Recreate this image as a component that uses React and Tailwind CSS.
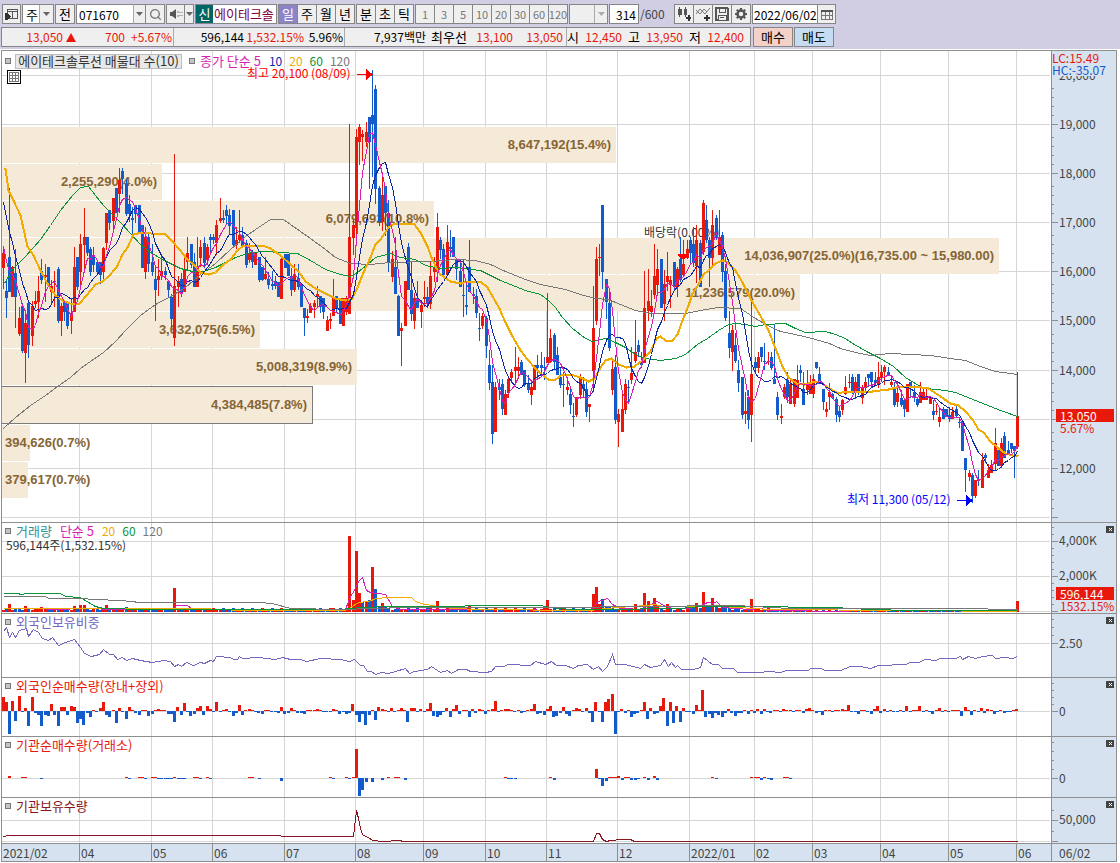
import { Search } from 'lucide-react'

const LEFT = 2
const WIDTH = 1049
const STEP = 3.2396

const RED = '#e8190a'
const BLUE = '#135bcb'

const months = [
  [2, '2021/02'], [79, '04'], [151, '05'], [212, '06'], [284, '07'], [355, '08'], [423, '09'], [485, '10'],
  [546, '11'], [617, '12'], [689, '2022/01'], [754, '02'], [812, '03'], [880, '04'], [948, '05'], [1016, '06'],
]

const profile = [
  { right: 616, label: '8,647,192(15.4%)' },
  { right: 162, label: '2,255,290(4.0%)' },
  { right: 434, label: '6,079,692(10.8%)' },
  { right: 999, label: '14,036,907(25.0%)(16,735.00 ~ 15,980.00)' },
  { right: 800, label: '11,236,579(20.0%)' },
  { right: 260, label: '3,632,075(6.5%)' },
  { right: 357, label: '5,008,319(8.9%)' },
  { right: 313, label: '4,384,485(7.8%)', current: true },
  { right: 30, label: '394,626(0.7%)' },
  { right: 28, label: '379,617(0.7%)' },
]

// x, high, low, body top, body bottom, up (1) / down (0)
const candles = [
  [3,246,289,253,268,1],[6,280,318,291,298,0],[9,188,292,257,292,0],[12,266,297,267,297,1],[15,249,328,273,297,0],[19,307,336,318,334,1],
  [22,303,353,306,351,0],[25,312,383,323,353,1],[28,301,358,303,345,0],[32,301,346,306,336,1],[35,291,308,301,304,1],[38,276,318,291,302,1],
  [41,259,284,271,280,0],[45,264,302,275,277,1],[48,267,287,267,285,0],[51,280,303,286,292,1],[54,271,307,281,282,1],[58,267,323,269,321,0],
  [61,303,336,306,321,1],[64,302,321,302,312,0],[67,303,329,303,326,0],[71,298,334,313,321,1],[74,247,312,267,312,1],[77,257,290,257,287,0],
  [80,234,290,244,272,1],[84,208,270,237,245,1],[87,237,256,237,253,0],[90,247,276,249,272,0],[93,247,272,257,265,0],[97,262,274,262,272,0],
  [100,262,284,262,275,0],[103,247,282,248,272,1],[106,213,250,213,243,1],[109,210,230,210,223,0],[113,198,233,198,221,1],[116,188,213,188,213,0],
  [119,168,213,180,194,1],[122,168,194,171,179,0],[126,179,216,184,214,0],[129,195,222,204,214,0],[132,207,237,218,220,0],[135,205,223,205,214,0],
  [139,205,233,205,233,0],[142,225,268,225,268,0],[145,227,279,237,272,1],[148,233,272,237,264,0],[152,244,276,262,272,0],[155,267,321,279,290,0],
  [158,259,296,276,280,1],[161,256,280,271,276,1],[165,267,280,271,275,0],[168,281,297,281,290,0],[171,294,328,297,319,0],[174,154,346,286,338,1],
  [178,276,307,281,287,1],[181,273,297,279,292,0],[184,256,292,269,292,1],[187,237,270,253,262,1],[191,244,268,244,265,0],[194,253,287,262,287,0],
  [197,237,287,267,287,1],[200,240,267,247,258,1],[204,237,268,243,263,0],[207,244,265,247,260,1],[210,234,252,237,240,0],[213,234,244,237,240,0],
  [216,220,255,225,243,1],[220,198,223,218,221,1],[223,210,223,218,220,0],[226,205,225,210,216,0],[229,209,234,215,226,0],[233,210,248,210,245,0],
  [236,227,249,240,245,1],[239,210,243,235,240,1],[242,227,247,235,247,0],[246,240,268,243,265,0],[249,243,263,253,260,1],[252,250,268,253,262,0],
  [255,252,265,252,265,1],[259,257,282,257,280,0],[262,267,281,267,280,0],[265,257,280,274,279,1],[268,272,289,279,285,0],[272,271,290,284,286,0],
  [275,276,289,281,286,0],[278,282,297,282,297,0],[281,257,299,259,299,1],[285,254,268,254,268,0],[288,254,276,254,276,0],[291,268,296,276,290,0],
  [294,264,292,274,290,1],[298,264,290,278,287,0],[301,284,307,284,307,0],[304,308,336,308,318,0],[307,309,323,316,318,1],[310,303,313,306,313,1],
  [314,300,318,303,307,1],[317,286,308,294,297,1],[320,296,313,296,307,0],[323,298,319,298,312,0],[327,316,331,320,331,1],[330,313,329,319,321,1],
  [333,279,316,298,316,1],[336,296,313,296,309,0],[340,298,324,298,324,0],[343,298,326,298,326,1],[346,296,315,298,312,1],[349,124,314,237,314,1],
  [353,219,255,225,238,1],[356,129,237,137,228,1],[359,124,165,127,142,1],[362,130,161,134,137,1],[366,122,147,132,142,1],[369,117,189,117,142,0],
  [372,70,177,115,124,0],[375,85,204,89,189,0],[379,186,226,188,222,0],[382,175,231,195,222,1],[385,186,236,186,213,0],[388,200,272,213,262,0],
  [392,251,282,259,277,1],[395,237,294,267,294,0],[398,295,336,296,336,0],[401,323,366,328,331,1],[405,281,326,281,326,1],[408,243,290,247,290,0],
  [411,262,321,290,314,0],[414,293,329,298,321,1],[417,281,308,298,308,0],[421,300,328,305,312,1],[424,281,307,297,299,1],[427,287,308,297,303,0],
  [430,262,309,276,304,1],[434,257,282,267,272,1],[437,213,282,227,272,1],[440,237,259,240,250,0],[443,244,275,249,275,0],[447,225,275,242,275,1],
  [450,230,257,247,249,0],[453,237,257,237,257,0],[456,260,280,260,269,0],[460,259,287,271,287,0],[463,260,317,295,296,0],[466,285,315,305,307,0],
  [469,240,292,267,292,0],[473,287,304,294,296,0],[476,289,318,296,313,0],[479,313,341,328,329,0],[482,313,329,316,326,1],[486,316,358,318,346,0],
  [489,350,390,365,383,0],[492,365,444,382,434,0],[495,382,432,387,432,1],[499,379,400,387,390,0],[502,379,415,384,409,0],[505,390,415,394,415,1],
  [508,377,398,379,393,1],[511,369,383,372,378,1],[515,347,385,367,371,1],[518,357,379,367,371,1],[521,360,375,362,375,0],[524,370,387,370,385,0],
  [528,375,393,383,390,0],[531,380,405,387,395,1],[534,365,390,365,390,1],[537,355,379,365,368,0],[541,352,377,365,368,0],[544,357,380,367,368,0],
  [547,293,363,357,363,1],[550,329,363,338,362,1],[554,333,370,335,362,0],[557,347,375,355,375,0],[560,367,388,377,385,0],[563,372,407,384,385,0],
  [567,377,395,387,390,1],[570,389,414,394,405,0],[573,403,427,416,417,0],[576,397,417,397,415,1],[580,374,399,377,395,1],[583,377,397,384,389,0],
  [586,382,417,389,412,0],[589,404,422,404,407,1],[593,286,392,328,371,1],[596,247,325,259,321,1],[599,244,276,257,258,1],[602,205,289,205,272,0],
  [606,279,319,279,302,0],[609,292,351,303,348,0],[612,359,395,369,390,1],[615,355,424,367,420,0],[618,409,447,414,422,1],[622,392,432,409,432,1],
  [625,379,414,384,410,1],[628,380,402,387,388,0],[631,347,384,373,380,1],[635,320,363,352,361,1],[638,340,357,345,352,0],[641,352,368,361,365,0],
  [644,271,363,308,363,1],[648,269,321,301,311,1],[651,290,317,306,312,1],[654,244,299,276,295,1],[657,249,294,269,285,1],[661,259,308,259,308,0],
  [664,270,321,284,304,1],[667,252,291,276,282,1],[670,276,308,280,285,1],[674,262,290,262,287,0],[677,267,297,269,287,1],[680,237,282,259,280,0],
  [683,240,277,264,275,1],[687,240,259,249,258,1],[690,237,265,240,253,0],[693,227,267,244,263,0],[696,225,283,240,266,1],[700,240,287,243,287,0],
  [703,200,255,203,252,1],[706,205,243,220,240,0],[709,237,287,240,258,0],[712,210,268,225,258,1],[716,215,240,218,238,0],[719,210,255,237,255,1],
  [722,232,282,235,272,0],[725,264,321,271,318,0],[729,311,358,333,348,0],[732,325,371,330,352,1],[735,333,363,345,361,0],[738,360,392,370,383,0],
  [742,377,419,377,415,0],[745,392,424,411,414,1],[748,390,429,397,420,0],[751,297,442,374,415,1],[755,357,372,362,368,0],[758,352,373,357,368,1],
  [761,347,362,347,357,0],[764,343,370,361,362,0],[768,352,365,361,362,1],[771,352,370,357,368,0],[774,325,384,379,384,0],[777,392,420,397,415,0],
  [781,404,424,416,418,1],[784,384,399,387,397,1],[787,372,403,380,397,0],[790,380,404,384,404,1],[794,379,407,379,404,1],[797,365,398,380,398,1],
  [800,365,382,370,373,0],[803,372,405,389,405,0],[807,370,395,384,390,1],[810,375,394,384,394,1],[813,374,398,379,394,1],[816,362,369,362,368,0],
  [819,367,384,374,384,0],[823,389,410,389,402,0],[826,402,417,409,412,1],[829,383,410,392,397,1],[832,393,399,394,398,0],[836,397,422,399,415,0],
  [839,407,422,411,417,0],[842,399,415,400,410,1],[845,376,395,387,394,1],[849,374,388,382,383,1],[852,374,394,377,392,0],[855,377,399,382,392,1],
  [858,374,395,374,393,0],[862,385,404,388,398,1],[865,377,392,382,388,1],[868,374,387,374,378,0],[871,372,388,372,382,0],[875,372,385,380,383,0],
  [878,362,388,377,385,1],[881,365,382,372,378,1],[884,365,385,367,372,1],[888,367,375,372,375,0],[891,375,387,382,385,1],[894,382,407,387,405,0],
  [897,382,407,393,402,1],[901,390,407,398,405,0],[904,400,417,400,409,0],[907,384,412,384,412,1],[910,382,398,382,387,0],[914,385,402,392,398,0],
  [917,397,407,399,405,0],[920,382,403,392,403,1],[923,388,400,392,400,1],[926,389,400,396,400,1],[930,397,404,397,404,1],[933,400,420,411,415,0],
  [936,404,415,411,412,1],[939,407,427,417,422,1],[943,407,419,409,419,0],[946,409,417,409,417,0],[949,407,422,415,419,0],[952,407,419,412,419,1],
  [956,406,418,409,416,0],[959,417,428,422,423,0],[962,421,451,421,451,0],[965,458,492,458,470,0],[969,470,481,473,477,1],[972,473,503,475,496,0],
  [975,480,498,480,496,1],[978,470,486,480,481,0],[982,453,488,460,488,1],[985,453,463,455,458,0],[988,464,478,470,478,1],[991,460,473,465,473,1],
  [995,428,470,443,464,1],[998,450,466,450,466,0],[1001,438,468,443,466,1],[1004,432,458,436,458,0],[1008,441,453,450,453,0],[1011,443,453,443,449,0],
  [1014,446,478,446,451,0],[1017,372,449,416,447,1],
]

const earlier = [145, 150, 158, 165, 172, 225, 240, 250, 262]
const closeOf = (c) => (c[5] ? c[3] : c[4])

const movingAverage = (n) => {
  const closes = [...earlier, ...candles.map(closeOf)]
  return candles
    .map((c, i) => {
      const end = i + earlier.length + 1
      const sum = closes.slice(end - n, end).reduce((a, b) => a + b, 0)
      return `${c[0]},${Math.round(sum / n)}`
    })
    .join(' ')
}

const ma20 = '3,168 5,168 8,190 13,200 20,215 27,246 33,255 40,270 48,285 55,295 62,300 72,304 79,303 86,295 95,284 102,281 108,276 116,267 122,254 127,247 133,234 141,232 150,233 165,234 172,241 180,250 186,258 194,265 200,272 208,274 215,272 222,265 230,259 237,250 243,245 262,245 270,248 280,255 290,264 298,271 305,281 315,288 325,293 335,298 345,300 352,298 357,287 363,272 370,257 375,244 380,239 388,227 394,223 413,223 420,232 427,246 431,257 436,268 440,274 450,281 460,283 467,281 480,281 487,287 492,296 499,308 504,320 511,334 520,350 527,359 535,368 541,374 548,379 555,379 562,374 570,374 580,377 588,381 594,378 600,367 605,360 611,358 618,364 626,367 634,366 642,360 650,351 656,338 660,336 665,340 672,340 677,334 682,320 688,305 692,293 698,284 703,274 708,270 715,263 722,260 727,262 735,270 742,282 750,298 758,312 768,330 775,348 782,366 788,377 796,383 804,384 815,381 820,382 829,388 838,393 845,391 872,391 880,390 888,389 900,386 915,386 928,388 940,396 950,403 958,405 965,411 972,419 978,429 983,432 990,441 997,447 1005,453 1012,455 1018,456'
const ma60 = '4,283 13,268 25,256 40,239 50,225 60,210 72,195 80,187 88,186 95,195 103,205 112,214 120,222 130,233 140,244 150,252 162,259 172,264 180,268 192,271 203,271 215,267 225,262 235,257 250,252 265,251 280,252 297,253 310,260 325,269 340,274 350,276 357,272 367,264 375,257 390,253 400,257 415,259 425,265 440,268 455,267 480,270 500,280 525,290 540,294 548,300 555,307 562,317 572,328 585,338 592,341 605,338 615,342 625,347 635,354 645,358 660,360 675,358 685,354 697,344 707,338 718,330 728,324 735,323 745,324 755,326 765,324 785,323 795,328 805,332 825,331 835,334 845,338 852,343 868,352 880,358 893,366 905,377 918,385 925,388 945,390 955,392 970,398 985,404 1000,410 1017,416'
const ma120 = '3,428 15,417 30,405 45,395 57,386 70,377 80,368 90,361 103,352 115,341 125,330 140,315 155,304 172,295 185,287 200,274 215,263 230,249 245,236 258,227 270,219 283,219 290,224 310,238 325,249 335,257 350,263 370,264 390,262 430,261 455,259 475,260 490,264 505,271 525,279 540,284 565,289 580,294 595,298 608,299 620,304 635,310 650,313 685,313 700,310 717,307 740,308 752,316 765,324 780,331 790,333 808,337 829,343 840,348 855,352 870,355 890,353 930,355 950,358 965,360 980,366 995,371 1017,374'

const volumeSpikes = {
  9: 8, 25: 6, 41: 5, 74: 6, 80: 7, 84: 7, 106: 7, 126: 5, 174: 24, 333: 4, 349: 76, 353: 12, 356: 61, 359: 19, 362: 10,
  366: 10, 369: 12, 372: 45, 375: 23, 379: 5, 382: 9, 385: 5, 430: 5, 437: 11, 447: 6, 469: 6, 495: 4, 547: 12, 593: 18,
  596: 25, 599: 8, 602: 13, 606: 6, 609: 5, 635: 8, 644: 19, 648: 11, 651: 6, 654: 14, 657: 7, 667: 8, 693: 7, 696: 9,
  703: 20, 706: 6, 709: 5, 712: 14, 716: 6, 722: 6, 725: 6, 729: 5, 751: 13, 1017: 11,
}
const volumeOf = (x, i) => volumeSpikes[x] ?? (x > 775 ? 1 + (i % 2) : 2 + ((i * 7) % 3))

const volume5 = '3,608 30,608 60,609 80,608 120,609 173,609 176,605 187,605 192,609 345,609 350,596 354,590 358,581 362,577 366,590 370,592 385,594 392,606 400,609 480,609 590,610 597,601 602,600 607,598 612,604 620,608 640,609 645,606 650,604 657,601 663,605 672,608 690,608 703,604 707,602 713,603 716,601 722,607 735,608 750,609 760,608 768,610 850,611'
const volume20 = '3,608 150,608 200,608 240,610 345,610 350,607 358,602 368,601 376,598 388,597 411,597 415,601 424,604 433,605 440,607 475,609 590,610 605,608 645,605 655,604 662,606 720,606 770,609 905,610 1017,611'
const volume60 = '3,593 18,593 20,594 28,593 60,593 65,596 80,597 88,602 95,606 103,608 145,609 340,609 360,607 390,606 540,605 550,607 570,609 600,609 680,608 700,606 785,606 790,607 840,607 845,608 905,610 1017,610'
const volume120 = '3,596 45,596 48,598 80,598 95,599 120,600 140,602 258,602 272,603 290,608 340,609 405,607 560,607 640,606 735,605 790,608 985,608 990,609 1017,609'

const foreignRatio = '3,631 6,627 9,637 12,632 15,637 19,630 26,628 28,636 33,629 38,632 42,638 48,640 52,637 58,645 65,642 74,639 80,647 84,653 91,656 99,654 103,649 109,654 113,654 117,659 122,657 126,660 132,658 140,660 152,662 163,660 170,661 174,666 178,664 181,666 186,662 193,665 200,662 204,663 210,660 213,661 216,656 230,657 233,659 237,659 239,656 242,658 258,657 275,659 282,657 290,659 300,659 306,661 320,658 340,659 349,661 354,659 360,665 363,665 367,671 371,671 375,674 381,672 388,673 395,671 405,668 409,673 414,671 427,669 431,666 440,672 447,670 451,673 458,669 466,669 470,671 485,672 491,671 495,666 503,666 508,664 530,665 535,661 545,664 551,661 556,665 565,665 573,668 578,665 587,664 593,669 598,666 602,671 607,666 612,654 615,664 625,664 640,668 644,664 650,667 660,665 664,659 668,666 671,662 675,667 677,665 681,669 693,669 700,667 703,657 712,664 718,664 722,668 733,668 737,672 760,672 768,671 780,672 786,670 808,670 810,668 820,668 825,670 840,670 850,666 860,666 870,668 878,665 905,664 910,662 918,662 925,659 935,660 940,658 955,658 960,656 962,659 968,656 975,658 982,656 992,655 995,658 1005,657 1012,658 1017,656'

const foreignNet = [
  14, 9, -23, 10, -10, 15, -1, 3, -15, 14, -2, -4, -15, -4, -5, 7, -4, -15, 4, 4, -4, 5, 4, -12, -8, -14, -2, -6, 1, -1,
  3, 9, -4, -6, 1, -12, 3, -1, -8, 4, 1, -2, -4, 1, 1, -5, -3, 1, 2, 1, 1, -3, -3, -11, 4, -4, 8, -1, -5, -3,
  3, 5, -4, 5, 2, -1, 9, -1, 1, 2, -1, -5, -2, 6, -4, 1, 2, 1, -1, -2, -3, 1, 1, -1, -1, -2, 4, -3, -2, 3,
  1, -2, -2, -3, 1, 1, 1, 2, 1, -1, -1, -1, 2, 1, -3, -1, -3, -2, 7, -4, -11, -3, -14, -4, 1, -9, 4, 2, 1, -1,
  3, -1, 1, 3, 1, -11, 3, 3, -1, 2, -1, 2, 8, -5, -6, -4, -1, 3, -6, 2, 6, -3, 1, 1, -6, 2, -2, 2, 1, -3,
  1, 2, 10, -1, 1, 2, 2, 1, -1, 1, -2, -1, 1, 2, 7, -3, -2, -4, 2, 5, -6, -5, -2, 4, -3, -5, 1, 3, 2, -1,
  3, -2, -11, 9, -1, -11, 9, 12, 17, -23, -1, 2, -2, 1, -6, -3, -2, 1, 9, -8, 3, -3, -2, 5, 13, -15, 9, -12, 5, -11,
  3, -1, -1, -3, 6, 1, 21, -6, -3, -7, -2, -4, -6, -2, 2, -2, -5, -2, -2, 1, -3, 1, -2, 2, -3, 2, -1, -2, 1, 1,
  -1, 2, 1, 1, -1, 1, 1, -2, 2, 3, 1, -2, -1, -4, 1, 1, -1, 1, 1, 2, 1, 6, -1, -1, -3, 1, 1, -1, -3, 2,
  5, -2, 2, -1, 1, -1, -1, 1, -1, 5, -1, 1, 1, 5, -1, 1, -1, -3, 1, 3, -1, 1, -1, 1, 1, 1, -5, 4, 1, -4,
  1, -1, 3, -2, 2, 1, -3, -1, 1, -2, -1, -1, 1, 2,
].map((v, i) => [Math.floor(3 + STEP * i), v])

const institutionNet = [
  [9, 2], [22, 1], [25, 1], [41, -1], [126, 1], [129, -1], [139, 1], [142, 1], [145, -1], [152, 1], [155, 1], [158, -1],
  [161, -1], [165, -1], [168, -1], [171, -1], [174, 1], [178, -1], [181, -1], [184, -1], [194, 1], [197, 1], [200, -1],
  [207, 1], [210, -1], [249, 1], [252, 1], [259, -1], [281, -3], [330, 1], [333, -1], [346, 1], [349, -1], [353, 1],
  [356, 29], [359, -18], [362, -12], [366, -4], [372, -4], [382, -2], [388, 1], [395, 1], [398, 1], [405, -2], [505, 1],
  [508, -1], [511, -1], [515, -1], [550, 1], [554, -2], [596, 9], [599, -1], [602, -8], [606, -3], [609, 1], [612, 1],
  [615, 1], [618, 2], [622, -2], [625, 1], [628, 1], [631, -2], [635, -2], [638, -1], [644, 1], [648, -2], [654, 2],
  [657, -2], [712, 1], [716, -1], [751, 1], [755, 1], [758, 1], [761, -2], [764, 1], [768, -1], [771, -2], [784, 1],
  [787, 1], [790, -1],
]

const institutionHeld = '3,836 8,835 280,835 281,836 353,836 356,810 358,818 361,832 363,835 368,837 372,840 383,841 398,840 404,841 593,841 596,833 599,833 602,839 606,841 610,840 622,839 630,839 634,841 654,841 1017,841'

const Line = ({ points, color, width = 1 }) => (
  <polyline points={points} fill="none" stroke={color} strokeWidth={width} transform="translate(0.5 0.5)" />
)

const Flow = ({ data, base }) =>
  data.map(([x, v]) => (
    <rect key={x} x={x - 1} y={v > 0 ? base - v : base} width="3" height={Math.abs(v)} fill={v > 0 ? RED : BLUE} />
  ))

const Plot = ({ top, bottom, children }) => (
  <svg
    className="pointer-events-none absolute inset-0 h-full w-full"
    viewBox={`${LEFT} ${top} ${WIDTH} ${bottom - top}`}
    preserveAspectRatio="none"
    shapeRendering="crispEdges"
    aria-hidden="true"
  >
    {children}
  </svg>
)

const Bullet = () => <span className="size-[6px] shrink-0 border border-[#777] bg-[#c4c4c4]" />

// One chart row: plot on the left, value scale on the right
const Panel = ({ top, bottom, className, lines, labels, minor, tags, closable = true, back, header, children }) => {
  const at = (y) => ({ top: `calc(${((y - top) / (bottom - top)) * 100}% - 7px)` })
  return (
    <section className={`flex border-b border-[#8f8f8f] ${className}`}>
      <div className="relative min-w-0 flex-1 bg-white">
        <Plot top={top} bottom={bottom}>
          {months.slice(1).map(([x]) => <rect key={x} x={x} y={top} width="1" height={bottom - top} fill="#d6d6d6" />)}
          {lines.map((y) => <rect key={y} x="2" y={y} width="1048" height="1" fill="#d6d6d6" />)}
        </Plot>
        {back}
        <Plot top={top} bottom={bottom}>{children}</Plot>
        {header}
      </div>
      <div className="relative w-[65px] shrink-0 border-l border-[#8f8f8f] bg-[#d6e2ef] text-xs text-[#444]">
        <svg
          className="absolute inset-y-0 left-0 h-full w-[6px]"
          viewBox={`0 ${top} 6 ${bottom - top}`}
          preserveAspectRatio="none"
          shapeRendering="crispEdges"
          aria-hidden="true"
        >
          {lines.map((y) => <rect key={y} x="0" y={y} width="6" height="1" fill="#8f8f8f" />)}
          {minor.map((y) => <rect key={y} x="0" y={y} width="2" height="1" fill="#8f8f8f" />)}
        </svg>
        {labels.map(([y, text]) => <span key={text} className="absolute left-[7px] leading-[14px]" style={at(y)}>{text}</span>)}
        {tags && (
          <div className="absolute right-[2px] left-1 text-[#e8190a]" style={at(tags.y)}>
            <p className="bg-[#e8190a] pl-1 leading-[13px] text-white">{tags.value}</p>
            <p className="pl-1 leading-[12px]">{tags.change}</p>
          </div>
        )}
        {closable && (
          <button type="button" aria-label="닫기" className="absolute top-[3px] right-[2px] flex h-[7px] w-2 items-center justify-center bg-[#444]">
            <svg viewBox="0 0 5 5" className="size-[5px]" aria-hidden="true">
              <path d="M1 1l3 3M4 1l-3 3" stroke="#fff" />
            </svg>
          </button>
        )}
      </div>
    </section>
  )
}

const Title = ({ children, className }) => (
  <div className={`absolute top-0 left-[3px] flex items-center gap-[5px] whitespace-nowrap leading-[16px] ${className}`}>
    <Bullet />
    <h2 className="flex items-center">{children}</h2>
  </div>
)

const Mark = ({ x, y, className, children }) => (
  <span
    className={`absolute text-xs whitespace-nowrap leading-[14px] ${className}`}
    style={{ left: `${((x - LEFT) / WIDTH) * 100}%`, top: `calc(${((y - 51) / 471) * 100}% - 7px)` }}
  >
    {children}
  </span>
)

const range = (from, to, step) => {
  const out = []
  for (let y = from; y <= to; y += step) out.push(y)
  return out
}

const priceLines = [75, 124, 173, 222, 271, 320, 370, 419, 468, 517]

const PricePanel = () => (
  <Panel
    top={51}
    bottom={522}
    className="min-h-[240px] flex-1"
    closable={false}
    lines={priceLines}
    minor={priceLines.flatMap((y) => [y - 9, y - 18, y - 27, y - 36]).filter((y) => y > 80)}
    labels={[
      [75, '20,000'], [124, '19,000'], [173, '18,000'], [222, '17,000'], [271, '16,000'],
      [320, '15,000'], [370, '14,000'], [468, '12,000'],
    ]}
    tags={{ y: 416, value: '13,050', change: '5.67%' }}
    back={
      <>
        <div className="absolute inset-x-0 flex flex-col gap-px font-[Liberation_Sans] text-[13px] font-bold text-[#866534]" style={{ top: `${(76 / 471) * 100}%`, height: `${(371 / 471) * 100}%` }}>
          {profile.map((p) => (
            <div
              key={p.label}
              className={`flex min-h-0 flex-1 items-center bg-[#f5e9d8] pr-[5px] pl-[3px] whitespace-nowrap ${p.right < 50 ? 'justify-start' : 'justify-end'} ${p.current ? 'border-y border-r border-[#7a7a7a]' : ''}`}
              style={{ width: `${((p.right - LEFT) / WIDTH) * 100}%` }}
            >
              {p.label}
            </div>
          ))}
        </div>
        <Mark x={644} y={232} className="text-[#333]">배당락(0.00%)</Mark>
      </>
    }
    header={
      <>
        <div className="absolute top-[2px] left-[3px] flex items-center whitespace-nowrap leading-[14px]">
          <Bullet />
          <button type="button" className="ml-1 flex h-[15px] w-[167px] items-center justify-center border border-[#bdbdbd] bg-[#e8e8e8] text-[#333]">
            에이테크솔루션 매물대 수(10)
          </button>
          <span className="mr-[5px] ml-[7px] flex"><Bullet /></span>
          <span className="text-[#d91eb4]">종가 단순 5</span>
          <span className="ml-2 text-xs text-[#0b27a5]">10</span>
          <span className="ml-[7px] text-xs text-[#f0ab00]">20</span>
          <span className="ml-[7px] text-xs text-[#0a9438]">60</span>
          <span className="ml-[7px] text-xs text-[#777]">120</span>
        </div>
        <button type="button" aria-label="표" className="absolute top-[19px] left-[5px] size-[14px] border border-black bg-white">
          <svg viewBox="0 0 12 12" className="size-3" shapeRendering="crispEdges" aria-hidden="true">
            <path d="M1.5 1.5h9v9h-9zM1.5 4.5h9M1.5 7.5h9M4.5 1.5v9M7.5 1.5v9" fill="none" stroke="#777" />
          </svg>
        </button>
        <Mark x={247} y={73} className="text-[#f00]">최고 20,100 (08/09)</Mark>
        <Mark x={847} y={499} className="text-[#00f]">최저 11,300 (05/12)</Mark>
      </>
    }
  >
    {candles.map(([x, high, low, a, b, up]) => (
      <g key={x} fill={up ? RED : BLUE}>
        <rect x={x} y={high} width="1" height={low - high} />
        <rect x={x - 1} y={a} width="3" height={Math.max(1, b - a)} />
      </g>
    ))}
    <Line points={ma120} color="#777" />
    <Line points={ma60} color="#0a9438" />
    <Line points={ma20} color="#f0ab00" width={2} />
    <Line points={movingAverage(10)} color="#0b27a5" />
    <Line points={movingAverage(5)} color="#d91eb4" />
    <path d="M357 74h9v-5l7 5.500l-7 5.500v-5h-9z" fill="#f00" />
    <path d="M957 500h9v-5l7 5.500l-7 5.500v-5h-9z" fill="#00f" />
    <path d="M678 254h10v1l-3 4h-4l-3-4z" fill="#f00" />
  </Panel>
)

const frame = 'flex h-5 shrink-0 items-center justify-center border border-[#868686]'
const btn = `${frame} bg-[#efefef]`
const join = '-ml-px'

const Caret = ({ color = '#666' }) => (
  <svg viewBox="0 0 7 4" className="h-1 w-[7px]" aria-hidden="true"><path d="M0 0h7L3.500 4z" fill={color} /></svg>
)

const Toolbar = () => (
  <div className="flex h-5 items-center gap-px pl-[2px] text-black">
    <button type="button" aria-label="창" className={`${btn} w-[19px]`}>
      <svg viewBox="0 0 14 14" className="size-[14px]" shapeRendering="crispEdges" aria-hidden="true">
        <path d="M2.500 2.500h10v9h-10zM2.500 4.500h10M7.500 4.500v7" fill="none" stroke="#555" />
        <path d="M0 6h2l4 3.500-4 3.500H0z" fill="#333" />
      </svg>
    </button>
    <div className={`${frame} relative w-8 bg-white`}>
      <select aria-label="구분" defaultValue="주" className="h-full w-full appearance-none bg-transparent pl-[3px] outline-none">
        <option>주</option>
        <option>선</option>
      </select>
      <span className="pointer-events-none absolute inset-y-0 right-0 flex w-[14px] items-center justify-center border-l border-[#aaa] bg-[#efefef]"><Caret /></span>
    </div>
    <button type="button" className={`${btn} w-5`}>전</button>
    <div className="flex">
      <input aria-label="종목코드" defaultValue="071670" className="h-5 w-[57px] border border-r-0 border-[#868686] bg-white pl-[2px] text-xs outline-none" />
      <button type="button" aria-label="종목 목록" className={`${btn} w-[13px] border-l-[#aaa]`}><Caret /></button>
      <button type="button" aria-label="검색" className={`${btn} ${join} w-5`}><Search size={13} color="#777" strokeWidth={2.500} /></button>
    </div>
    <div className="flex">
      <button type="button" aria-label="소리" className={`${btn} w-[19px]`}>
        <svg viewBox="0 0 14 12" className="h-3 w-[14px]" aria-hidden="true">
          <path d="M1 4h2l4-3v10L3 8H1z" fill="#555" />
          <path d="M9 3v2M9 7v2M11 4v1M11 7v1M13 4v1M13 7v1" stroke="#777" />
        </svg>
      </button>
      <button type="button" aria-label="소리 목록" className={`${btn} ${join} w-[10px]`}><Caret /></button>
    </div>
    <div className="flex h-5 w-[82px] shrink-0 border border-[#868686] bg-white">
      <span className="flex w-[17px] items-center justify-center bg-[#006666] text-white">신</span>
      <input aria-label="종목명" defaultValue="에이테크솔" className="w-[63px] bg-white pl-px text-[#800040] outline-none" />
    </div>
    <div className="ml-px flex">
      {['일', '주', '월', '년'].map((t) => (
        <button key={t} type="button" className={`${frame} ${join} w-5 ${t === '일' ? 'bg-[#8b84c8] text-white' : 'bg-[#efefef]'}`}>{t}</button>
      ))}
    </div>
    <div className="ml-px flex">
      {['분', '초', '틱'].map((t) => <button key={t} type="button" className={`${btn} ${join} w-5`}>{t}</button>)}
    </div>
    <div className="ml-px flex text-[11px] text-[#777]">
      {[1, 3, 5, 10, 20, 30, 60, 120].map((n) => (
        <button key={n} type="button" disabled className={`${btn} ${join} w-5`}>{n}</button>
      ))}
    </div>
    <div className={`${btn} relative w-[39px]`}>
      <select aria-label="간격" disabled className="h-full w-full appearance-none bg-transparent" />
      <span className="pointer-events-none absolute inset-y-0 right-0 flex w-[13px] items-center justify-center border-l border-[#aaa]"><Caret color="#aaa" /></span>
    </div>
    <label className="flex items-center text-xs">
      <input aria-label="표시 봉 수" defaultValue="314" className="h-5 w-[30px] border border-[#868686] bg-white pr-[2px] text-right outline-none" />
      <span className="w-[34px] pl-px text-[#444]">/600</span>
    </label>
    <div className="flex">
      <button type="button" aria-label="봉 추가" className={`${btn} w-5`}>
        <svg viewBox="0 0 16 16" className="size-4" shapeRendering="crispEdges" aria-hidden="true">
          <path d="M2 3h4v6H2zM8 3h3v6H8zM3 1h1v10H3zM9 1h1v10H9z" fill="#555" />
          <path d="M10 11h5v2h-5zM12 9h2v6h-2z" fill="#333" />
        </svg>
      </button>
      <button type="button" aria-label="지표 추가" className={`${btn} ${join} w-5`}>
        <svg viewBox="0 0 16 16" className="size-4" aria-hidden="true">
          <path d="M1 8l4-5 5 5 5-6M1 4l4 4 4-5 3 3" fill="none" stroke="#777" />
          <path d="M9 11h6v2H9zM11 9h2v6h-2z" fill="#333" />
        </svg>
      </button>
      <button type="button" aria-label="저장" className={`${btn} ${join} w-5`}>
        <svg viewBox="0 0 14 14" className="size-[14px]" shapeRendering="crispEdges" aria-hidden="true">
          <path d="M1 1h11l1 1v11H1z" fill="#eee" stroke="#555" strokeWidth="2" />
          <path d="M4 1h6v4H4zM3 8h8v5H3z" fill="#eee" stroke="#555" />
          <path d="M5 10h4" stroke="#555" />
        </svg>
      </button>
      <button type="button" aria-label="설정" className={`${btn} ${join} w-5`}>
        <svg viewBox="0 0 14 14" className="size-[14px]" aria-hidden="true">
          <circle cx="7" cy="7" r="3.500" fill="none" stroke="#555" strokeWidth="2.500" />
          <path d="M7 1v2M7 11v2M1 7h2M11 7h2M2.800 2.800l1.400 1.400M9.800 9.800l1.400 1.400M2.800 11.200l1.400-1.400M9.800 4.200l1.400-1.400" stroke="#555" strokeWidth="2.200" />
        </svg>
      </button>
    </div>
    <div className="flex">
      <input aria-label="날짜" defaultValue="2022/06/02" className="h-5 w-[66px] border border-[#868686] bg-white pl-px text-xs outline-none" />
      <button type="button" aria-label="달력" className={`${btn} ${join} w-[19px]`}>
        <svg viewBox="0 0 12 11" className="h-[11px] w-3" shapeRendering="crispEdges" aria-hidden="true">
          <path d="M0.500 1.500h11v9h-11zM0.500 6.500h11M4.500 3v7M8.500 3v7" fill="none" stroke="#777" />
          <path d="M0 1h12v2H0z" fill="#555" />
        </svg>
      </button>
    </div>
  </div>
)

const QuoteBar = () => (
  <div className="mt-[3px] flex h-5 gap-[2px] pl-px text-xs leading-[18px]">
    <dl className="flex w-[750px] shrink-0 border border-[#868686] bg-[#efefef] whitespace-nowrap">
      <div className="flex w-[172px] items-center justify-end border-r border-[#aaa] text-right text-[#e8190a]">
        <dd>13,050</dd>
        <dd className="mx-[3px]">
          <svg viewBox="0 0 10 9" className="h-[9px] w-[10px]" role="img" aria-label="상승"><path d="M5 0l5 9H0z" fill={RED} /></svg>
        </dd>
        <dd className="w-[46px]">700</dd>
        <dd className="w-[48px] pr-px">+5.67%</dd>
      </div>
      <div className="flex w-[171px] justify-end border-r border-[#aaa] text-right">
        <dd>596,144</dd>
        <dd className="w-[60px] text-[#e8190a]">1,532.15%</dd>
        <dd className="w-10 pr-px">5.96%</dd>
      </div>
      <div className="flex w-[222px] border-r border-[#aaa] text-right">
        <dd className="w-[81px]">7,937백만</dd>
        <dt className="w-[41px] text-[13px]">최우선</dt>
        <dd className="w-[46px] text-[#e8190a]">13,100</dd>
        <dd className="w-[50px] text-[#e8190a]">13,050</dd>
      </div>
      <div className="flex flex-1 text-right">
        <dt className="w-3 text-[13px]">시</dt>
        <dd className="w-[43px] text-[#e8190a]">12,450</dd>
        <dt className="w-[18px] text-[13px]">고</dt>
        <dd className="w-[43px] text-[#e8190a]">13,950</dd>
        <dt className="w-[18px] text-[13px]">저</dt>
        <dd className="w-[43px] text-[#e8190a]">12,400</dd>
      </div>
    </dl>
    <button type="button" className="w-10 shrink-0 border border-[#868686] bg-[#f3d0c8] text-[13px]">매수</button>
    <button type="button" className="-ml-px w-10 shrink-0 border border-[#868686] bg-[#c5dcf2] text-[13px]">매도</button>
  </div>
)

export default function App() {
  return (
    <main className="flex h-screen flex-col bg-[#d1cee4] pt-1 font-['Noto_Sans_CJK_KR',sans-serif] text-[13px]">
      <Toolbar />
      <QuoteBar />
      <div className="mt-[2px] flex min-h-0 flex-1 flex-col bg-white pt-px pr-[3px] pb-px pl-px">
        <div className="relative flex min-h-0 flex-1 flex-col border-x border-t border-[#8f8f8f]">
          <PricePanel />
          <p className="absolute top-0 right-0 w-16 bg-[#d6e2ef] pt-px text-xs leading-[12px] text-[#e8190a]">
            LC:15.49
            <span className="block text-[#135bcb]">HC:-35.07</span>
          </p>

          <Panel
            top={523}
            bottom={613}
            className="h-[91px] shrink-0"
            lines={[541, 576, 611]}
            minor={range(527, 610, 7)}
            labels={[[540, '4,000K'], [575, '2,000K']]}
            tags={{ y: 594, value: '596,144', change: '1532.15%' }}
            header={
              <>
                <Title className="text-[#2e9296]">
                  거래량
                  <span className="ml-2 text-[#d91eb4]">단순 5</span>
                  <span className="ml-2 text-xs text-[#f0ab00]">20</span>
                  <span className="ml-[7px] text-xs text-[#0a9438]">60</span>
                  <span className="ml-[7px] text-xs text-[#777]">120</span>
                </Title>
                <p className="absolute top-[15px] left-1 text-xs leading-[14px] whitespace-nowrap text-[#333]">596,144주(1,532.15%)</p>
              </>
            }
          >
            {candles.map((c, i) => {
              const h = volumeOf(c[0], i)
              const rising = i ? closeOf(c) <= closeOf(candles[i - 1]) : c[5]
              return <rect key={c[0]} x={c[0] - 1} y={612 - h} width="3" height={h} fill={rising ? RED : BLUE} />
            })}
            <Line points={volume5} color="#d91eb4" />
            <Line points={volume20} color="#f0ab00" />
            <Line points={volume60} color="#0a9438" />
            <Line points={volume120} color="#777" />
          </Panel>

          <Panel
            top={614}
            bottom={677}
            className="h-16 shrink-0"
            lines={[643]}
            minor={[619, 627, 635]}
            labels={[[643, '2.50']]}
            header={<Title className="text-[#7666c2]">외국인보유비중</Title>}
          >
            <Line points={foreignRatio} color="#7666c2" />
          </Panel>

          <Panel
            top={678}
            bottom={736}
            className="h-[59px] shrink-0"
            lines={[711]}
            minor={[683, 690, 697, 704]}
            labels={[[711, '0']]}
            header={<Title className="text-[#e8190a]">외국인순매수량(장내+장외)</Title>}
          >
            <Flow data={foreignNet} base={711} />
          </Panel>

          <Panel
            top={737}
            bottom={797}
            className="h-[61px] shrink-0"
            lines={[778]}
            minor={[742, 751, 760, 769]}
            labels={[[778, '0']]}
            header={<Title className="text-[#e8190a]">기관순매수량(거래소)</Title>}
          >
            <Flow data={institutionNet} base={778} />
          </Panel>

          <Panel
            top={798}
            bottom={843}
            className="h-[46px] shrink-0"
            lines={[820, 841]}
            minor={[810, 831]}
            labels={[[819, '50,000']]}
            header={<Title className="text-[#8a1622]">기관보유수량</Title>}
          >
            <Line points={institutionHeld} color="#8a1622" />
          </Panel>

          <div className="flex h-[18px] shrink-0 border-b border-[#8f8f8f] bg-[#d6e2ef] text-xs leading-[17px] text-[#444]">
            <ol className="relative flex-1">
              {months.map(([x, label], i) => (
                <li
                  key={x}
                  className={`absolute inset-y-0 pl-px ${i ? 'border-l border-[#8f8f8f]' : ''}`}
                  style={{ left: `${((x - LEFT) / WIDTH) * 100}%` }}
                >
                  {label}
                </li>
              ))}
            </ol>
            <time className="w-[65px] border-l border-[#8f8f8f] pl-[7px]">06/02</time>
          </div>
        </div>
      </div>
    </main>
  )
}
